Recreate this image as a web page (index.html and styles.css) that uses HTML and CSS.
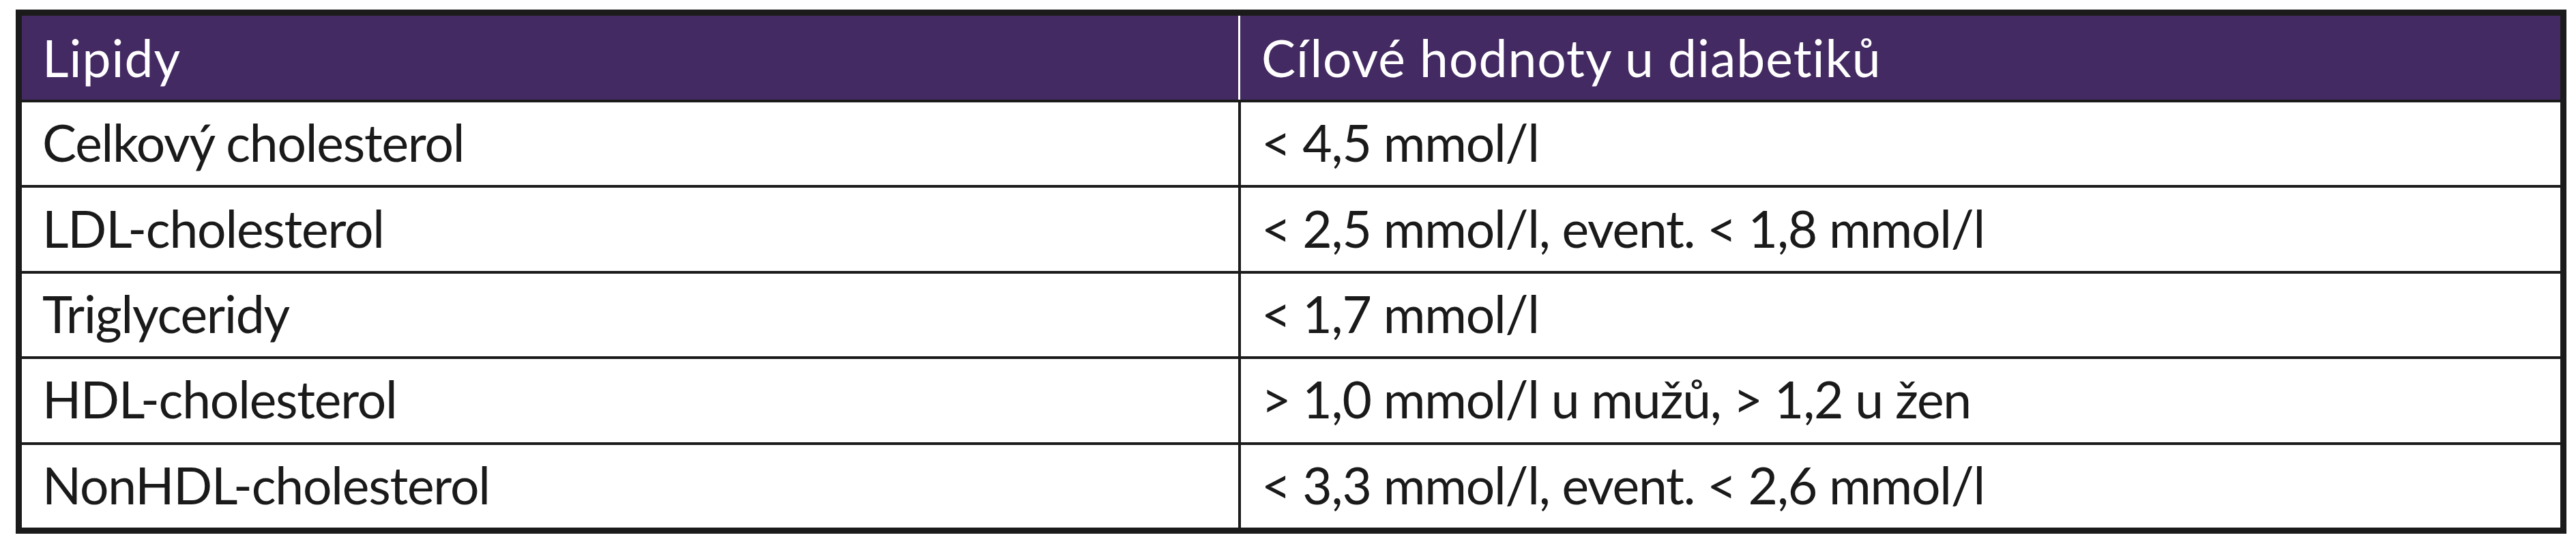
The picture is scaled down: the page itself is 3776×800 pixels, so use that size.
FILE: index.html
```html
<!DOCTYPE html>
<html lang="cs">
<head>
<meta charset="utf-8">
<title>Lipidy – cílové hodnoty u diabetiků</title>
<link rel="stylesheet" href="styles.css">
</head>
<body>
<div class="table">
  <div class="grid">
    <div class="cell head">Lipidy</div>
    <div class="cell head head-right">Cílové hodnoty u diabetiků</div>

    <div class="cell">Celkový cholesterol</div>
    <div class="cell">&lt; 4,5 mmol/l</div>

    <div class="cell">LDL-cholesterol</div>
    <div class="cell">&lt; 2,5 mmol/l, event. &lt; 1,8 mmol/l</div>

    <div class="cell">Triglyceridy</div>
    <div class="cell">&lt; 1,7 mmol/l</div>

    <div class="cell">HDL-cholesterol</div>
    <div class="cell">&gt; 1,0 mmol/l u mužů, &gt; 1,2 u žen</div>

    <div class="cell">NonHDL-cholesterol</div>
    <div class="cell">&lt; 3,3 mmol/l, event. &lt; 2,6 mmol/l</div>
  </div>
</div>
</body>
</html>
```

FILE: styles.css
```css
html, body {
  margin: 0;
  padding: 0;
  background: #ffffff;
}

body {
  padding: 14px 23px;
  font-family: "Lato", "Liberation Sans", sans-serif;
}

.table {
  width: 3739px;
  border: 9px solid #1b1b1b;
  box-sizing: border-box;
  background: #1b1b1b;
}

.grid {
  display: grid;
  grid-template-columns: 1783px 1934px;
  grid-template-rows: 123px repeat(5, 1fr);
  column-gap: 4px;
  row-gap: 4px;
  height: 750px;
}

.cell {
  display: flex;
  align-items: center;
  background: #ffffff;
  color: #1a1a1a;
  font-size: 75px;
  line-height: 1;
  padding: 0 0 4px 30px;
  white-space: nowrap;
  letter-spacing: -1.2px;
}

.head {
  background: #442a62;
  color: #ffffff;
  padding-bottom: 0;
  letter-spacing: 1px;
}

.head-right {
  border-left: 3px solid #ffffff;
  margin-left: -4px;
  padding-left: 31px;
}
```
